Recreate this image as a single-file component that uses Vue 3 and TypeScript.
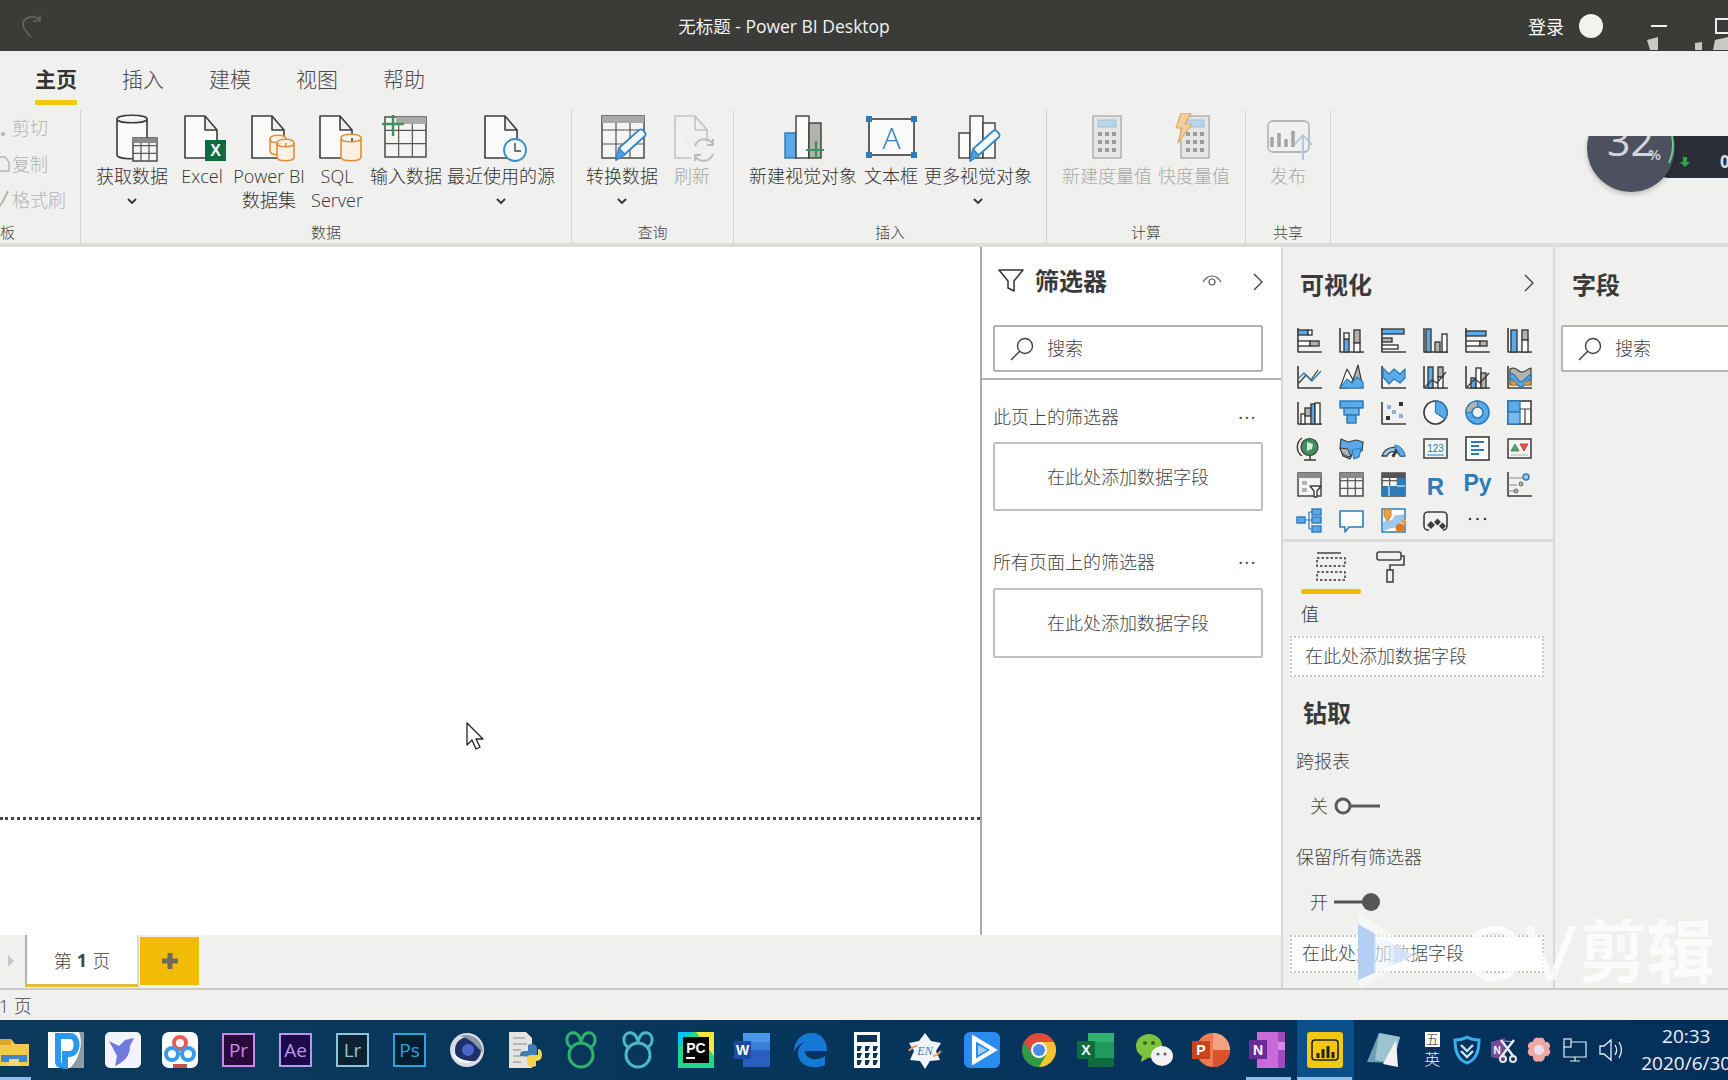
<script setup lang="ts">
const D = '#3c3c3a'
const B = '#5aa9ea'
const BD = '#2b7cb8'
const G = '#b2b2ae'
const W = '#ffffff'

const r = (x: number, y: number, w: number, h: number, f: string, s = D, sw = 1.4) =>
  `<rect x="${x}" y="${y}" width="${w}" height="${h}" fill="${f}" stroke="${s}" stroke-width="${sw}"/>`
const p = (d: string, f = 'none', s = D, sw = 1.5) =>
  `<path d="${d}" fill="${f}" stroke="${s}" stroke-width="${sw}" stroke-linejoin="round"/>`
const c = (x: number, y: number, rad: number, f: string, s = D, sw = 1.4) =>
  `<circle cx="${x}" cy="${y}" r="${rad}" fill="${f}" stroke="${s}" stroke-width="${sw}"/>`

const axisL = p('M1 0v24h24', 'none', D, 1.6)
const axisB = p('M1 2v22h24', 'none', D, 1.6)

// ribbon icons live in a 60x50 box, x=30 is the button's centre
const doc = (x: number, col = D, fill = '#fafaf8') => p(`M${x} 3h20l12 14v28h-32z M${x + 20} 3v14h12`, fill, col, 1.6)
const cyl = (x: number, y: number, w: number, h: number, col: string, fill: string) =>
  p(`M${x} ${y + 4}c0-5 ${w}-5 ${w} 0v${h - 8}c0 5-${w} 5-${w} 0z M${x} ${y + 4}c0 5 ${w} 5 ${w} 0`, fill, col, 1.6)
const grid = (x: number, y: number, w: number, h: number, cols: number, rows: number, col = D) => {
  let out = r(x, y, w, h, '#f4f4f2', col, 1.6)
  for (let i = 1; i < cols; i++) out += p(`M${x + (w * i) / cols} ${y}v${h}`, 'none', col, 1.2)
  for (let i = 1; i < rows; i++) out += p(`M${x} ${y + (h * i) / rows}h${w}`, 'none', col, 1.2)
  return out
}
const pencil = (x: number, y: number) =>
  p(`M${x} ${y + 31}l3-12 20-18c3-2 8 3 6 6l-20 18z M${x + 3} ${y + 19}l6 7`, '#f2f7fb', '#2f86c6', 1.7) +
  p(`M${x} ${y + 31}l3-12 6 7z`, '#4f9fe0', '#2f86c6', 1)
const calc = (x: number, col = '#b5b5b3') => {
  let out = r(x, 3, 28, 42, '#e6e6e4', col, 1.6) + r(x + 5, 7, 18, 7, '#b6d6ee', '#9cc0da', 1)
  for (const y of [19, 27, 35]) for (const i of [0, 7, 14]) out += `<rect x="${x + 5 + i}" y="${y}" width="4" height="4" fill="#9c9c9a"/>`
  return out
}

const ribbonIcons: Record<string, string> = {
  getData: cyl(15, 2, 30, 44, D, '#fafaf8') + grid(31, 25, 24, 23, 3, 3, '#555') + `<rect x="31" y="25" width="24" height="5" fill="#8a8a88"/>`,
  excel: doc(13) + `<rect x="33" y="27" width="21" height="21" fill="#0f6b3f"/><text x="43.5" y="43" text-anchor="middle" font-family="Liberation Sans" font-weight="700" font-size="16" fill="#fff">X</text>`,
  pbi: doc(13) + cyl(31, 22, 16, 20, '#de8f3e', '#fbf0e2') + cyl(38, 26, 17, 22, '#de8f3e', '#fbf0e2'),
  sql: doc(13) + cyl(34, 21, 20, 27, '#de8f3e', '#fbf0e2'),
  enter: grid(9, 4, 41, 40, 3, 3, '#555') + `<rect x="20" y="4" width="30" height="7" fill="#a9a9a7"/>` + p('M17 2v21M6 11h22', 'none', '#3f8f5f', 2.4),
  recent: doc(14) + c(44, 37, 11, '#f4f8fb', '#3b8fc4', 1.8) + p('M44 30v8h6', 'none', '#444', 1.4),
  transform: grid(10, 3, 42, 42, 3, 3, '#555') + `<rect x="10" y="3" width="42" height="7" fill="#a9a9a7"/>` + pencil(24, 16),
  refresh: p('M13 3h20l12 14v12M30 45H13V3M33 3v14h12', '#f2f2f0', '#c4c4c2', 1.6) + p('M33 33a10 10 0 0 1 18-2M51 26v6h-6M51 41a10 10 0 0 1-18 2M33 48v-6h6', 'none', '#bdbdbb', 2),
  newVisual: r(12, 20, 11, 25, B, BD) + r(23, 3, 13, 42, '#fafaf8', D) + r(36, 10, 12, 35, '#b2b2ae', D) + p('M43 28v18M33 37h18', 'none', '#3f8f5f', 2.2),
  textbox: r(8, 6, 45, 36, '#fafaf8', D, 1.6) + `<rect x="5" y="3" width="6" height="6" fill="${BD}"/><rect x="50" y="3" width="6" height="6" fill="${BD}"/><rect x="5" y="39" width="6" height="6" fill="${BD}"/><rect x="50" y="39" width="6" height="6" fill="${BD}"/><text x="30.5" y="36" text-anchor="middle" font-family="Open Sans" font-weight="300" font-size="30" fill="${BD}">A</text>`,
  moreVisual: r(11, 20, 11, 25, '#fafaf8', D) + r(22, 3, 13, 42, '#fafaf8', D) + r(35, 10, 12, 35, '#fafaf8', D) + pencil(22, 17),
  measure: calc(16),
  quick: calc(17) + p('M17 0h10l-6 11h7l-14 19 4-15h-6z', '#f4cf9c', '#e0a868', 1.2),
  publish: `<rect x="10" y="8" width="41" height="31" rx="5" fill="none" stroke="#b8b8b6" stroke-width="1.8"/><path d="M14 24v10M21 20v14M28 26v8M35 18v16" stroke="#a4a4a2" stroke-width="3.5"/><path d="M45 47V23M36 32l9-10 9 10" fill="none" stroke="#a9c7e2" stroke-width="1.8"/>`,
}

type RibbonItem = { lines: string[]; icon: string; w: number; more?: boolean; off?: boolean }
type RibbonGroup = { label: string; w: number; pad: number; items: RibbonItem[] }

const groups: RibbonGroup[] = [
  { label: '数据', w: 491, pad: 11, items: [
    { lines: ['获取数据'], icon: 'getData', w: 80, more: true },
    { lines: ['Excel'], icon: 'excel', w: 60 },
    { lines: ['Power BI', '数据集'], icon: 'pbi', w: 74 },
    { lines: ['SQL', 'Server'], icon: 'sql', w: 62 },
    { lines: ['输入数据'], icon: 'enter', w: 76 },
    { lines: ['最近使用的源'], icon: 'recent', w: 114, more: true },
  ] },
  { label: '查询', w: 162, pad: 10, items: [
    { lines: ['转换数据'], icon: 'transform', w: 80, more: true },
    { lines: ['刷新'], icon: 'refresh', w: 60, off: true },
  ] },
  { label: '插入', w: 313, pad: 11, items: [
    { lines: ['新建视觉对象'], icon: 'newVisual', w: 116 },
    { lines: ['文本框'], icon: 'textbox', w: 60 },
    { lines: ['更多视觉对象'], icon: 'moreVisual', w: 114, more: true },
  ] },
  { label: '计算', w: 199, pad: 15, items: [
    { lines: ['新建度量值'], icon: 'measure', w: 90, off: true },
    { lines: ['快度量值'], icon: 'quick', w: 84, off: true },
  ] },
  { label: '共享', w: 85, pad: 12, items: [{ lines: ['发布'], icon: 'publish', w: 60, off: true }] },
]

const vizIcons: string[] = [
  axisL + r(1, 2, 10, 5, B) + r(11, 2, 4, 5, W) + r(1, 13, 12, 5, W) + r(13, 13, 9, 5, G),
  axisL + r(5, 11, 5, 13, B) + r(5, 5, 5, 6, W) + r(15, 2, 6, 13, G) + r(15, 15, 6, 9, W),
  p('M1 0v24h24', 'none', D, 1.6) + r(1, 1, 22, 5, B) + r(1, 10, 10, 4, G) + r(1, 17, 16, 4, W),
  axisL + r(3, 1, 5, 23, B) + r(12, 14, 5, 10, G) + r(19, 6, 5, 18, W),
  axisL + r(1, 3, 20, 5, B) + r(1, 13, 14, 5, W) + r(15, 13, 7, 5, G),
  axisL + r(4, 2, 6, 22, B) + r(15, 2, 6, 10, G) + r(15, 12, 6, 12, W),
  axisB + p('M2 19l7-8 5 5 7-10', 'none', D, 1.3) + p('M2 14l5-5 8 8 9-10', 'none', BD, 1.3),
  p('M1 24l8-16 5 8 5-15 5 23z', G, D, 1.2) + p('M8 5l6 11-6 8H1z', W, D, 1.2) + p('M1 24l7-9 5 4 5-6 6 5v6z', B, BD, 1.2),
  axisB + p('M2 4l6 6 5-5 6 5 5-5v9l-5 5-6-4-5 5-6-7z', B, BD, 1.3),
  axisB + r(5, 3, 5, 21, B) + r(15, 3, 5, 10, G) + r(15, 13, 5, 11, W) + p('M2 23l7-7 5 3 9-11', 'none', D, 1.3),
  axisB + r(6, 14, 5, 10, B) + r(11, 4, 5, 20, W) + r(16, 9, 5, 15, G) + p('M2 23l8-8 5 4 9-10', 'none', D, 1.3),
  axisB + p('M3 5c6-3 7 2 11 3s7-4 10-4v17H3z', G, D, 1.2) + p('M3 10c6-2 7 8 11 8s7-8 10-7v4c-4 0-6 8-10 8S9 15 3 15z', B, BD, 1.4) + r(4, 18, 5, 3, '#e8a040', '#c8802a', 1) + r(18, 18, 5, 3, '#e8a040', '#c8802a', 1),
  axisB + r(4, 14, 4, 10, W) + r(8, 8, 6, 8, G) + r(14, 4, 4, 20, B) + r(18, 3, 5, 21, W),
  p('M1 1h23v7H1z', B, BD) + p('M5 8h15v7H5z', '#6ab4ee', BD) + p('M8 15h9v8H8z', B, BD),
  axisB + `<rect x="6" y="5" width="4" height="4" fill="#8fb2d2"/><rect x="11" y="10" width="4" height="4" fill="#8fb2d2"/><rect x="18" y="2" width="4" height="4" fill="#333"/><rect x="5" y="16" width="4" height="4" fill="#333"/><rect x="18" y="14" width="4" height="4" fill="#8fb2d2"/>`,
  c(12.5, 12.5, 11.5, W, D, 1.7) + p('M12.5 1A11.5 11.5 0 0 1 22 19l-9.5-6.5z', B, BD, 1.3),
  c(12.5, 12.5, 11.5, B, BD, 1.6) + c(12.5, 12.5, 5.5, '#eef0ee', BD, 1.6) + p('M1 12.5A11.5 11.5 0 0 1 12.5 1v6a6 6 0 0 0-6 5.5z', G, BD, 1.2),
  r(1, 1, 23, 23, W, D, 1.6) + r(1, 1, 12, 11, B, BD) + r(1, 12, 12, 12, '#78baf0', BD) + p('M13 9h11M18 9v15', 'none', D, 1.2),
  c(12.5, 11, 8.5, '#3f8f5f', D, 1.2) + p('M5 2a11 11 0 0 0 0 18M7 24h12M13 20v4', 'none', D, 1.5) + p('M10 6l6 2-1 5-5 2z', '#d8e8e0', 'none'),
  p('M2 3l7 3 8-2 7 2-1 9-9 1-3 7-7-3-3-8z', B, D, 1.2) + p('M1 12l8 1 3 8-5-1-4-3z', G, D, 1) + p('M13 14l9-2-2 9-5 2z', B, BD, 1.2),
  p('M1 20a12 12 0 0 1 23 0h-5a7 7 0 0 0-13 0z', '#9ec8ea', D, 1.3) + p('M14 9a12 12 0 0 1 10 11h-5a7 7 0 0 0-5-6z', B, BD, 1) + p('M11 20l4-7 1 2-3 6z', D, D, 1),
  r(1, 3, 23, 19, '#f4f4f2', D, 1.5) + `<text x="12.5" y="16" text-anchor="middle" font-family="Liberation Sans" font-size="10" fill="${BD}">123</text>` + p('M4 19h17', 'none', BD, 1),
  r(1, 1, 23, 23, W, D, 1.6) + p('M6 6h13M6 10h8M6 14h13M6 18h8', 'none', BD, 2),
  r(1, 3, 23, 19, '#f4f4f2', D, 1.5) + p('M4 15l4-7 4 7z', '#5aa36e', '#3f8f5f', 1) + p('M13 8h8l-4 7z', '#e0584f', '#c84038', 1) + p('M4 19h17', 'none', G, 1),
  r(1, 1, 23, 23, '#f4f4f2', D, 1.4) + `<rect x="1" y="1" width="23" height="5" fill="#8a8a88"/><rect x="5" y="9" width="5" height="4" fill="${G}"/><rect x="5" y="16" width="5" height="4" fill="${G}"/>` + p('M13 14h11l-4 5v6h-3v-6z', W, D, 1.4),
  grid(1, 1, 23, 23, 3, 3, '#555') + `<rect x="1" y="1" width="23" height="5" fill="#8a8a88"/>`,
  grid(1, 1, 23, 23, 3, 3, '#555') + `<rect x="1" y="1" width="23" height="5" fill="#555"/><rect x="16" y="6" width="8" height="18" fill="${BD}"/><rect x="1" y="14" width="15" height="10" fill="${BD}"/>` + p('M8 14v10M16 14h8', 'none', '#fff', 1),
  `<text x="12.5" y="23" text-anchor="middle" font-family="Liberation Sans" font-weight="700" font-size="24" fill="${BD}">R</text>`,
  `<text x="12.5" y="19" text-anchor="middle" font-family="Liberation Sans" font-weight="700" font-size="23" fill="${BD}">Py</text>`,
  axisL + p('M1 6h14M1 13h9M1 19h6', 'none', '#888', 1.2) + c(19, 5, 3, '#9ec8ea', BD, 1.4) + c(14, 12, 2, G, '#666', 1) + c(9, 19, 2, G, '#666', 1),
  r(0, 9, 8, 6, B, BD) + p('M8 12h4M12 4v17M12 4h3M12 12h3M12 21h3', 'none', BD, 1.2) + r(15, 1, 9, 6, B, BD) + r(15, 9, 9, 6, B, BD) + r(15, 18, 9, 6, B, BD),
  p('M1 3h23v16H10l-4 5v-5H1z', W, BD, 1.6),
  r(1, 1, 23, 23, W, BD, 1.5) + p('M2 14c6-4 8 1 10-4s6-2 11-4v8c-5 1-6 6-11 6-4 0-7 3-10 3z', '#9ec8ea', 'none') + p('M3 1h7v7l-3.5 5L3 8z', '#e8a040', '#c8802a', 1) + c(19, 20, 4, '#d87a20', '#d87a20', 1) + c(23, 14, 2, '#e8a040', '#e8a040', 1),
  `<rect x="1" y="4" width="23" height="18" rx="4" fill="none" stroke="${D}" stroke-width="1.6"/><rect x="6" y="18" width="14" height="6" fill="#f0f0ee"/><path d="M4 17l4-4 4 4-4 4zM11 14l3.500-3.500 3.500 3.500-3.500 3.500zM16 18l3.500-3.500 3.500 3.500-3.500 3.500z" fill="${D}"/>`,
  `<circle cx="5" cy="11" r="1.3" fill="${D}"/><circle cx="12.5" cy="11" r="1.3" fill="${D}"/><circle cx="20" cy="11" r="1.3" fill="${D}"/>`,
]

const pr = (bg: string, edge: string, text: string) =>
  `<rect x="5" y="4" width="31" height="32" fill="${bg}" stroke="${edge}" stroke-width="2"/><text x="20.500" y="27" text-anchor="middle" font-family="Open Sans" font-weight="400" font-size="19" fill="${edge}">${text}</text>`
const navicat = (col: string) =>
  `<circle cx="20" cy="25" r="12" fill="none" stroke="${col}" stroke-width="3"/><path d="M11 18C2 12 6 1 14 3c3 1 6 5 6 11 0-6 3-10 6-11 8-2 12 9 3 15" fill="none" stroke="${col}" stroke-width="3"/>`

const taskIcons: string[] = [
  `<path d="M8 9h14l4 5h14v22H8z" fill="#f3c94d"/><path d="M8 9h14v6H8z" fill="#dea62e"/><rect x="12" y="25" width="26" height="7" fill="#3f86c8"/><rect x="20" y="29" width="10" height="7" fill="#f4d778"/>`,
  `<rect x="2" y="2" width="36" height="36" fill="#fff"/><path d="M38 2v36H24C32 30 38 16 33 2z" fill="#8f9aa4"/><path d="M12 6h12c9 0 9 18-1 18h-4v12c-3 0-7-1-7-4z" fill="none" stroke="#2c97ee" stroke-width="6"/>`,
  `<rect x="2" y="2" width="36" height="36" rx="5" fill="#f2f3fb"/><path d="M6 11l10 5 6-6 9-2-4 8c0 10-6 16-15 20l2-10z" fill="#7178e0"/>`,
  `<rect x="2" y="2" width="36" height="36" rx="7" fill="#fff"/><circle cx="20" cy="13" r="6" fill="none" stroke="#ea5b55" stroke-width="4"/><circle cx="12" cy="24" r="6" fill="none" stroke="#3a9be8" stroke-width="4"/><circle cx="28" cy="24" r="6" fill="none" stroke="#3a9be8" stroke-width="4"/><rect x="13" y="34" width="14" height="4" fill="#c0564e"/>`,
  pr('#2a0a3a', '#c88ae8', 'Pr'),
  pr('#1e0a4a', '#b49ae8', 'Ae'),
  pr('#0c2233', '#8cc4dc', 'Lr'),
  pr('#061e33', '#2aa4dc', 'Ps'),
  `<circle cx="20" cy="20" r="17" fill="#d8dce4"/><circle cx="21" cy="20" r="13" fill="#1f2f6a"/><path d="M13 6c12-4 22 4 23 16-5-2-8-12-23-16z" fill="#8a96a8"/><path d="M5 22c3 10 14 14 24 9-9 1-18-2-24-9z" fill="#fff"/><circle cx="21" cy="20" r="6" fill="#4a68c8"/>`,
  `<path d="M5 2h17l6 6v30H5z" fill="#e4e4e2"/><path d="M9 8h12M9 14h14M9 20h8M9 26h8M9 32h8" stroke="#a8a8a6" stroke-width="1.5"/><path d="M16 26c0-6 4-5 8-5V15c4-2 9-1 9 4v4c0 3-3 4-5 4z" fill="#3d7eb0"/><path d="M34 19c3 0 4 3 4 6s-2 6-6 6v5c-4 2-9 1-9-3v-5c0-3 3-3 5-3h6z" fill="#f4d44a"/>`,
  navicat('#2fb36a'),
  navicat('#4cb8c4'),
  `<rect x="2" y="2" width="36" height="36" fill="#21d789"/><path d="M20 2h18v24z" fill="#f5e642"/><path d="M2 2h14L2 18z" fill="#07c3f2"/><rect x="7" y="7" width="26" height="26" fill="#000"/><text x="20" y="23" text-anchor="middle" font-family="Liberation Sans" font-weight="700" font-size="14" fill="#fff">PC</text><rect x="10" y="27" width="9" height="2" fill="#fff"/>`,
  `<rect x="10" y="3" width="27" height="34" fill="#2a5fc0"/><rect x="10" y="3" width="27" height="9" fill="#4a98e8"/><rect x="10" y="12" width="27" height="8" fill="#3a80d8"/><rect x="1" y="11" width="17" height="18" fill="#1c4aa8"/><text x="9.500" y="25" text-anchor="middle" font-family="Liberation Sans" font-weight="700" font-size="14" fill="#fff">W</text>`,
  `<path d="M4 22C4 10 12 3 22 3c9 0 15 7 15 18H15c0 8 11 11 20 5v9c-13 6-27 0-27-12 0-6 4-10 8-11-6 1-10 5-12 10z" fill="#1478d4"/>`,
  `<rect x="7" y="2" width="26" height="36" fill="#fff"/><rect x="10" y="5" width="20" height="7" fill="#0a3358"/><g fill="#0a3358"><path d="M10 16h5l-2 5h-3zM18 16h5l-2 5h-3zM26 16h5l-2 5h-3zM10 23h5l-2 5h-3zM18 23h5l-2 5h-3zM26 23h5l-2 5h-3zM10 30h5l-2 5h-3zM18 30h5l-2 5h-3zM26 30h5l-2 5h-3z"/></g>`,
  `<path d="M20 3l6 8 10 2-5 8 4 9-10 1-5 8-5-8-10-1 4-9-5-8 10-2z" fill="#f2f6f8"/><path d="M4 21c4-5 6-5 8-5M36 21c-4 5-6 5-8 5" stroke="#e8a060" stroke-width="2" fill="none"/><text x="20" y="25" text-anchor="middle" font-family="Liberation Serif" font-style="italic" font-size="12" fill="#3a7ab8">EN</text>`,
  `<rect x="2" y="2" width="36" height="36" rx="6" fill="#2a8cf0"/><path d="M12 8l20 12-20 12z" fill="none" stroke="#fff" stroke-width="4"/><path d="M16 15l9 5-9 5z" fill="#9fd0fa"/>`,
  `<circle cx="20" cy="20" r="17" fill="#df4a3a"/><path d="M20 37a17 17 0 0 0 15-25H20z" fill="#f2c430"/><path d="M3 20a17 17 0 0 0 17 17l7-12-14-1-8-12z" fill="#2f9a4a"/><circle cx="20" cy="20" r="8" fill="#fff"/><circle cx="20" cy="20" r="6" fill="#4a8ae8"/>`,
  `<rect x="12" y="3" width="26" height="34" fill="#1f9a5c"/><rect x="12" y="3" width="26" height="9" fill="#32b070"/><rect x="12" y="28" width="26" height="9" fill="#0f6b3f"/><rect x="1" y="11" width="18" height="18" fill="#0f6b3f"/><text x="10" y="25" text-anchor="middle" font-family="Liberation Sans" font-weight="700" font-size="14" fill="#fff">X</text>`,
  `<ellipse cx="15" cy="16" rx="13" ry="12" fill="#7cc43e"/><path d="M8 26l-1 6 7-4z" fill="#7cc43e"/><circle cx="11" cy="13" r="2" fill="#3a6a1e"/><circle cx="19" cy="13" r="2" fill="#3a6a1e"/><ellipse cx="28" cy="26" rx="11" ry="10" fill="#f2f2f2"/><circle cx="24" cy="24" r="1.6" fill="#666"/><circle cx="31" cy="24" r="1.6" fill="#666"/>`,
  `<circle cx="22" cy="20" r="17" fill="#ed7a50"/><path d="M22 3a17 17 0 0 1 17 17H22z" fill="#f4a083"/><path d="M22 20h17a17 17 0 0 1-17 17z" fill="#d9532c"/><rect x="1" y="11" width="18" height="18" fill="#c8431e"/><text x="10" y="25" text-anchor="middle" font-family="Liberation Sans" font-weight="700" font-size="14" fill="#fff">P</text>`,
  `<rect x="9" y="2" width="28" height="36" fill="#c86ad8"/><rect x="30" y="2" width="7" height="36" fill="#a24ac0"/><rect x="30" y="12" width="7" height="8" fill="#d88ae8"/><rect x="1" y="10" width="18" height="19" fill="#6a2a9a"/><text x="10" y="25" text-anchor="middle" font-family="Liberation Sans" font-weight="700" font-size="14" fill="#fff">N</text>`,
  `<rect x="2" y="2" width="36" height="36" rx="3" fill="#f2c811"/><rect x="7" y="10" width="26" height="20" rx="3" fill="none" stroke="#222" stroke-width="1.6"/><path d="M13 28v-5M18 28v-9M23 28v-12M28 28v-6" stroke="#222" stroke-width="3"/>`,
  `<path d="M4 32L16 3l21 4-7 26z" fill="#6aa0b4"/><path d="M16 3l21 4-7 26-18-3z" fill="#9cc4d0"/><path d="M20 34l13-24 2 27z" fill="#f2f2f0"/>`,
]

const trayIcons: string[] = [
  `<path d="M15 2c5 3 8 3 12 3 0 12-3 20-12 23C6 25 3 17 3 5c4 0 7 0 12-3z" fill="none" stroke="#38b0f0" stroke-width="3"/><path d="M9 10l6 6 6-6M9 16l6 6 6-6" fill="none" stroke="#bfe6fa" stroke-width="2.400"/>`,
  `<path d="M3 7l14-4v22L3 22z" fill="#7a4a9a"/><path d="M17 6l9 1" stroke="#c8a8d8"/><text x="9" y="19" text-anchor="middle" font-family="Liberation Sans" font-weight="700" font-size="10" fill="#fff">N</text><path d="M13 5l13 17M26 5L13 22" stroke="#e8e8e8" stroke-width="2.400"/><circle cx="15" cy="24" r="3" fill="none" stroke="#e8e8e8" stroke-width="2"/><circle cx="25" cy="24" r="3" fill="none" stroke="#e8e8e8" stroke-width="2"/>`,
  `<path d="M15 3c4-2 6 2 6 4 3-1 7 3 4 7 3 3 0 8-4 7 0 4-4 7-6 5-3 2-7-1-6-5-4 1-7-4-4-7-3-4 1-8 4-7 0-2 2-6 6-4z" fill="#f0a8a0"/><circle cx="15" cy="15" r="5" fill="#e8e0f0"/>`,
  `<path d="M11 7h15v15H4V12M10 26h10M15 22v4" fill="none" stroke="#e8eef2" stroke-width="1.200"/><rect x="4" y="4" width="7" height="8" fill="#0a3358" stroke="#e8eef2" stroke-width="1.200"/>`,
  `<path d="M4 11v8h4l7 6V5l-7 6zM19 10c2 3 2 7 0 10M23 7c3 5 3 11 0 16" fill="none" stroke="#e8eef2" stroke-width="1.300"/>`,
]
</script>

<template>
  <div class="app">
    <header class="titlebar">
      <svg class="redo" width="24" height="26" viewBox="0 0 24 26"><path d="M20 7C14 1 4 4 3 11c0 4 3 8 8 13M20 2v6h-7" fill="none" stroke="#66665f" stroke-width="1.6" /></svg>
      <span class="title">无标题 - Power BI Desktop</span>
      <span class="login">登录</span>
      <span class="avatar"></span>
      <span class="min"></span>
      <span class="max"></span>
    </header>

    <section class="ribbon">
      <nav class="tabs">
        <span class="tab active">主页</span>
        <span class="tab">插入</span>
        <span class="tab">建模</span>
        <span class="tab">视图</span>
        <span class="tab">帮助</span>
      </nav>
      <div class="groups">
        <div class="group clip">
          <div class="clip-rows">
            <div class="clip-row">
              <svg width="10" height="20" viewBox="0 0 10 20"><circle cx="3" cy="17" r="2" fill="#b5b5b3" /></svg>剪切
            </div>
            <div class="clip-row">
              <svg width="10" height="20" viewBox="0 0 10 20"><path d="M-2 4l7 0 4 5v9H-2z" fill="none" stroke="#b5b5b3" stroke-width="1.4" /></svg>复制
            </div>
            <div class="clip-row">
              <svg width="10" height="20" viewBox="0 0 10 20"><path d="M8 2L2 14l-3 4" fill="none" stroke="#b5b5b3" stroke-width="2" /></svg>格式刷
            </div>
          </div>
          <div class="group-label clip-label">剪贴板</div>
        </div>

        <div v-for="g in groups" :key="g.label" class="group" :style="{ width: g.w + 'px' }">
          <div class="buttons" :style="{ paddingLeft: g.pad + 'px' }">
            <div
              v-for="item in g.items"
              :key="item.icon"
              class="btn"
              :class="{ off: item.off }"
              :style="{ width: item.w + 'px' }"
            >
              <svg class="btn-icon" width="60" height="50" viewBox="0 0 60 50" v-html="ribbonIcons[item.icon]"></svg>
              <span v-for="line in item.lines" :key="line" class="btn-line">{{ line }}</span>
              <svg v-if="item.more" class="chev" width="10" height="7" viewBox="0 0 10 7"><path d="M1 1l4 4 4-4" fill="none" stroke="#333" stroke-width="1.8" /></svg>
            </div>
          </div>
          <div class="group-label">{{ g.label }}</div>
        </div>
      </div>
    </section>

    <main class="body">
      <div class="left">
        <div class="work">
          <div class="canvas">
            <div class="page"></div>
          </div>
          <aside class="filters">
            <div class="filters-head">
              <svg class="funnel" width="26" height="24" viewBox="0 0 26 24"><path d="M1 1h24l-9 11v10l-6-3v-7z" fill="none" stroke="#333" stroke-width="1.5" stroke-linejoin="round" /></svg>
              <span class="pane-title">筛选器</span>
              <svg class="eye" width="20" height="14" viewBox="0 0 20 14"><path d="M1 8c5-8 13-8 18 0" fill="none" stroke="#555" stroke-width="1.2" /><circle cx="10" cy="8" r="3" fill="none" stroke="#555" stroke-width="1.2" /></svg>
              <svg class="chevron" width="10" height="18" viewBox="0 0 10 18"><path d="M1 1l8 8-8 8" fill="none" stroke="#444" stroke-width="1.4" /></svg>
            </div>
            <div class="search-wrap">
              <div class="search">
                <svg width="24" height="24" viewBox="0 0 24 24"><circle cx="15" cy="9" r="7.5" fill="none" stroke="#444" stroke-width="1.4" /><path d="M9.5 14.5L1 23" stroke="#444" stroke-width="1.4" /></svg>
                <span>搜索</span>
              </div>
            </div>
            <div class="filter-head first"><span>此页上的筛选器</span><span class="dots">···</span></div>
            <div class="filter-box">在此处添加数据字段</div>
            <div class="filter-head second"><span>所有页面上的筛选器</span><span class="dots">···</span></div>
            <div class="filter-box">在此处添加数据字段</div>
          </aside>
        </div>
        <div class="page-tabs">
          <svg class="tab-arrow" width="8" height="14" viewBox="0 0 8 14"><path d="M1 1l6 6-6 6z" fill="#c4c8cc" /></svg>
          <div class="page-tab">第 <b>1</b> 页</div>
          <div class="page-add">
            <svg width="18" height="18" viewBox="0 0 18 18"><path d="M9 1v16M1 9h16" stroke="#6e6a5c" stroke-width="5" /></svg>
          </div>
        </div>
      </div>

      <aside class="viz">
        <div class="viz-head">
          <span class="pane-title">可视化</span>
          <svg class="viz-chev" width="10" height="18" viewBox="0 0 10 18"><path d="M1 1l8 8-8 8" fill="none" stroke="#444" stroke-width="1.4" /></svg>
        </div>
        <div class="viz-grid">
          <div v-for="(ic, i) in vizIcons" :key="i" class="viz-cell">
            <svg width="25" height="25" viewBox="0 0 25 25" v-html="ic"></svg>
          </div>
        </div>
        <div class="viz-tabs">
          <div class="viz-tab on">
            <svg width="32" height="32" viewBox="0 0 32 32"><path d="M2 2h24" stroke="#444" stroke-width="1.5" /><path d="M2 7h28v8H2zM2 21h28v8H2z" fill="none" stroke="#333" stroke-width="1.5" stroke-dasharray="2.5 2" /></svg>
          </div>
          <div class="viz-tab">
            <svg width="30" height="32" viewBox="0 0 30 32"><rect x="1" y="1" width="24" height="8" rx="2" fill="none" stroke="#444" stroke-width="1.6" /><path d="M25 5h3v9H14v5" fill="none" stroke="#444" stroke-width="1.6" /><rect x="11" y="19" width="6" height="12" fill="none" stroke="#444" stroke-width="1.6" /></svg>
          </div>
        </div>
        <div class="well-label">值</div>
        <div class="well">在此处添加数据字段</div>
        <div class="drill-title">钻取</div>
        <div class="opt-label first">跨报表</div>
        <div class="toggle-row">
          <span>关</span>
          <svg width="46" height="18" viewBox="0 0 46 18"><circle cx="9" cy="9" r="7" fill="none" stroke="#5a5a5a" stroke-width="3" /><path d="M16 9h30" stroke="#5a5a5a" stroke-width="3" /></svg>
        </div>
        <div class="opt-label second">保留所有筛选器</div>
        <div class="toggle-row on">
          <span>开</span>
          <svg width="46" height="18" viewBox="0 0 46 18"><circle cx="37" cy="9" r="9" fill="#555" /><path d="M0 9h30" stroke="#555" stroke-width="3" /></svg>
        </div>
        <div class="well small">在此处添加数据字段</div>
      </aside>

      <aside class="fields">
        <div class="fields-head"><span class="pane-title">字段</span></div>
        <div class="search wide">
          <svg width="24" height="24" viewBox="0 0 24 24"><circle cx="15" cy="9" r="7.5" fill="none" stroke="#444" stroke-width="1.4" /><path d="M9.5 14.5L1 23" stroke="#444" stroke-width="1.4" /></svg>
          <span>搜索</span>
        </div>
      </aside>
    </main>

    <footer class="status"><span>第 1 页</span></footer>

    <div class="taskbar">
      <div class="apps">
        <div v-for="(ic, i) in taskIcons" :key="i" class="app-item" :class="{ running: i === 0 || i === 22, current: i === 23 }">
          <svg width="40" height="40" viewBox="0 0 40 40" v-html="ic"></svg>
        </div>
      </div>
      <div class="tray">
        <div class="ime"><span class="ime-top">五</span><span>英</span></div>
        <div v-for="(ic, i) in trayIcons" :key="i" class="tray-item">
          <svg width="30" height="30" viewBox="0 0 30 30" v-html="ic"></svg>
        </div>
        <div class="clock"><span>20:33</span><span>2020/6/30</span></div>
      </div>
    </div>

    <!-- things lying over the app: screen recorder's widget, cursor, watermark -->
    <div class="monitor">
      <div class="monitor-panel">
        <svg class="monitor-arrow" width="10" height="10" viewBox="0 0 10 10"><path d="M3 0h4v5h3L5 10 0 5h3z" fill="#2ea44f" /></svg>
        <span class="monitor-val">0</span>
      </div>
      <div class="monitor-ball">
        <span class="monitor-num">32</span><span class="monitor-pct">%</span>
      </div>
      <svg class="monitor-arc" width="12" height="30" viewBox="0 0 12 30"><path d="M6 0c2 9 1 18-3 27" fill="none" stroke="#6ec49a" stroke-width="2" /></svg>
    </div>
    <svg class="cursor" width="20" height="28" viewBox="0 0 20 28"><path d="M1 1v22l5-5 4 9 4-2-4-8h7z" fill="#fff" stroke="#222" stroke-width="1.3" stroke-linejoin="round" /></svg>
    <svg class="shards" width="84" height="16" viewBox="0 0 84 16"><path d="M1 5l11-3v13H4zM49 8l7-1v8h-7zM67 15l2-10 13-3v13z" fill="#c8c8c4" /></svg>
    <svg class="mark-play" width="66" height="80" viewBox="0 0 66 80">
      <defs>
        <linearGradient id="mk" x1="0" y1="0" x2="1" y2="0">
          <stop offset="0" stop-color="#b5cff4" />
          <stop offset="0.28" stop-color="#b5cff4" />
          <stop offset="0.34" stop-color="#dce9fa" stop-opacity="0.15" />
          <stop offset="0.55" stop-color="#dce9fa" stop-opacity="0.4" />
          <stop offset="0.7" stop-color="#d5e3fa" />
          <stop offset="1" stop-color="#d5e3fa" />
        </linearGradient>
      </defs>
      <path d="M2 2l62 44-62 32z" fill="#fff" opacity=".45" />
      <path d="M1 14l56 32-56 24z" fill="url(#mk)" />
    </svg>
    <div class="mark-text"><span class="mark-ov">OV</span><span class="mark-cn">剪辑</span></div>
  </div>
</template>

<style>
html,
body {
  margin: 0;
  background: #f0f0ee;
}
</style>

<style scoped>
.app {
  position: relative;
  width: 1728px;
  height: 1080px;
  overflow: hidden;
  display: flex;
  flex-direction: column;
  background: #f0f0ee;
  color: #3a3a3a;
  font-family: "Open Sans", "Noto Sans CJK SC", sans-serif;
  font-size: 18px;
  font-weight: 300;
}

.titlebar {
  position: relative;
  height: 51px;
  flex: none;
  display: flex;
  align-items: center;
  background: #3b3b38;
  color: #fff;
}
.redo {
  margin-left: 20px;
}
.title {
  position: absolute;
  left: 0;
  width: 1568px;
  text-align: center;
  font-size: 17.5px;
  font-weight: 400;
  color: #f2f2f2;
}
.login {
  margin-left: auto;
  font-size: 18px;
  font-weight: 400;
}
.avatar {
  width: 24px;
  height: 24px;
  border-radius: 50%;
  background: #f2f2ee;
  margin-left: 15px;
}
.min {
  width: 16px;
  height: 2px;
  background: #eee;
  margin-left: 48px;
}
.max {
  width: 14px;
  height: 12px;
  border: 2px solid #eee;
  margin-left: 48px;
  margin-right: -5px;
}

.ribbon {
  height: 196px;
  flex: none;
  box-sizing: border-box;
  border-bottom: 4px solid #dcdcda;
}
.tabs {
  height: 57px;
  box-sizing: border-box;
  padding: 15px 0 0 35px;
  display: flex;
  gap: 45px;
}
.tab {
  width: 42px;
  height: 40px;
  line-height: 26px;
  font-size: 21px;
  white-space: nowrap;
  color: #4a4a4a;
}
.tab.active {
  font-weight: 700;
  color: #333;
  box-shadow: 0 2px 0 0 #f2c811;
  border-bottom: 3px solid #f2c811;
  height: 34px;
}

.groups {
  display: flex;
  height: 134px;
  margin-top: 2px;
}
.group {
  box-sizing: border-box;
  display: flex;
  flex-direction: column;
  border-right: 1px solid #d4d4d2;
  flex: none;
  height: 133px;
}
.buttons {
  display: flex;
  flex: 1;
  min-height: 0;
}
.btn {
  flex: none;
  display: flex;
  flex-direction: column;
  align-items: center;
  padding-top: 3px;
  white-space: nowrap;
  color: #333;
}
.btn.off {
  color: #a9a9a7;
}
.btn-icon {
  flex: none;
  margin-bottom: 1px;
}
.btn-line {
  line-height: 24px;
  height: 24px;
  flex: none;
}
.chev {
  margin-top: 10px;
  flex: none;
}
.group-label {
  height: 18px;
  margin-bottom: 1px;
  line-height: 16px;
  flex: none;
  text-align: center;
  font-size: 15px;
  color: #444;
}
.clip {
  width: 81px;
  overflow: hidden;
}
.clip-rows {
  flex: 1;
  margin-top: -1px;
}
.clip-row {
  display: flex;
  align-items: center;
  height: 36px;
  font-size: 18px;
  color: #b5b5b3;
  white-space: nowrap;
  gap: 2px;
}
.clip-label {
  text-align: left;
  margin-left: -30px;
  white-space: nowrap;
}

.body {
  flex: 1;
  min-height: 0;
  display: flex;
}
.left {
  width: 1281px;
  flex: none;
  display: flex;
  flex-direction: column;
}
.work {
  flex: 1;
  min-height: 0;
  display: flex;
}
.canvas {
  width: 980px;
  flex: none;
  background: #fff;
}
.page {
  height: 570px;
  border-bottom: 3px dotted #444;
}

.filters {
  flex: 1;
  background: #fff;
  border-left: 2px solid #a8a8a8;
  box-sizing: border-box;
}
.filters-head {
  height: 64px;
  display: flex;
  align-items: center;
  padding-left: 16px;
}
.funnel {
  margin-top: 3px;
}
.pane-title {
  font-size: 24px;
  font-weight: 700;
  color: #3a3a3a;
}
.filters-head .pane-title {
  margin-left: 11px;
}
.eye {
  margin: 3px 0 0 95px;
}
.chevron {
  margin: 5px 0 0 31px;
}
.search-wrap {
  margin-top: 14px;
  padding: 0 0 6px 11px;
  border-bottom: 2px solid #b0b0b0;
}
.search {
  box-sizing: border-box;
  width: 270px;
  height: 47px;
  background: #fff;
  border: 2px solid #b4b4b4;
  border-radius: 2px;
  display: flex;
  align-items: center;
  padding-left: 15px;
  gap: 13px;
  color: #444;
}
.search span {
  padding-bottom: 3px;
}
.filter-head {
  display: flex;
  justify-content: space-between;
  width: 270px;
  height: 30px;
  line-height: 30px;
  margin-left: 11px;
  color: #444;
}
.filter-head.first {
  margin-top: 22px;
}
.filter-head.second {
  margin-top: 36px;
}
.filter-head.second + .filter-box {
  margin-top: 11px;
  height: 70px;
}
.dots {
  color: #444;
  font-weight: 400;
  letter-spacing: 1.5px;
  margin-right: 6px;
}
.filter-box {
  box-sizing: border-box;
  width: 270px;
  height: 69px;
  margin: 10px 0 0 11px;
  padding-bottom: 2px;
  border: 2px solid #c0c0c0;
  border-radius: 2px;
  display: flex;
  align-items: center;
  justify-content: center;
  color: #444;
}

.page-tabs {
  height: 53px;
  flex: none;
  display: flex;
  background: #f0f0ee;
}
.tab-arrow {
  margin: 19px 0 0 7px;
}
.page-tab {
  box-sizing: border-box;
  width: 114px;
  height: 52px;
  margin-left: 10px;
  background: #fff;
  border-left: 2px solid #b0b0b0;
  border-right: 2px solid #d8d8d6;
  border-bottom: 3px solid #e8b93a;
  display: flex;
  align-items: center;
  justify-content: center;
  gap: 5px;
  color: #444;
}
.page-tab b {
  font-weight: 700;
}
.page-add {
  width: 59px;
  height: 48px;
  margin: 2px 0 0 1px;
  background: #f2bc06;
  display: flex;
  align-items: center;
  justify-content: center;
}

.viz {
  width: 272px;
  flex: none;
  box-sizing: border-box;
  border-left: 2px solid #d8d8d6;
}
.viz-head {
  height: 72px;
  display: flex;
  align-items: center;
  padding-left: 17px;
  box-sizing: border-box;
}
.viz-chev {
  margin-left: 152px;
}
.viz-grid {
  margin: 3px 0 0 5px;
  display: grid;
  grid-template-columns: repeat(6, 42px);
  grid-auto-rows: 36px;
}
.viz-cell {
  display: flex;
  align-items: center;
  justify-content: center;
}
.viz-cell svg {
  overflow: visible;
}
.viz-tabs {
  margin-top: 1px;
  border-top: 3px solid #dcdcda;
  display: flex;
  padding-left: 18px;
  height: 50px;
  box-sizing: border-box;
}
.viz-tab {
  width: 60px;
  height: 47px;
  display: flex;
  align-items: center;
  justify-content: center;
  box-sizing: border-box;
  padding-top: 3px;
  position: relative;
}
.viz-tab.on::after {
  content: "";
  position: absolute;
  left: 0;
  right: 0;
  bottom: -5px;
  height: 5px;
  border-radius: 3px;
  background: #f2bc06;
}
.well-label {
  margin: 13px 0 0 18px;
  height: 24px;
  line-height: 24px;
  color: #333;
}
.well {
  box-sizing: border-box;
  width: 254px;
  height: 41px;
  margin: 10px 0 0 7px;
  padding: 0 0 4px 13px;
  background: #fff;
  border: 2px dotted #c8c8c6;
  display: flex;
  align-items: center;
  color: #444;
}
.well.small {
  height: 38px;
  margin-top: 21px;
  padding-left: 10px;
}
.drill-title {
  margin: 20px 0 0 20px;
  height: 32px;
  line-height: 32px;
  font-size: 24px;
  font-weight: 700;
  color: #3a3a3a;
}
.opt-label {
  margin-left: 13px;
  height: 24px;
  line-height: 24px;
  color: #444;
}
.opt-label.first {
  margin-top: 20px;
}
.opt-label.second {
  margin-top: 27px;
}
.toggle-row {
  display: flex;
  align-items: center;
  gap: 6px;
  height: 24px;
  margin: 21px 0 0 27px;
  color: #444;
}
.toggle-row span {
  margin-top: -2px;
}

.fields {
  flex: 1;
  min-width: 0;
  border-left: 2px solid #d8d8d6;
}
.fields-head {
  height: 72px;
  display: flex;
  align-items: center;
  padding-left: 17px;
}
.search.wide {
  width: 220px;
  margin: 6px 0 0 6px;
}

.status {
  height: 32px;
  flex: none;
  box-sizing: border-box;
  border-top: 2px solid #cacac8;
  display: flex;
  align-items: center;
  color: #444;
  font-size: 18px;
}
.status span {
  margin-left: -24px;
  white-space: nowrap;
}

.taskbar {
  height: 60px;
  flex: none;
  display: flex;
  background: linear-gradient(90deg, #0b3a5c, #06355c 50%, #03305a);
}
.apps {
  display: flex;
  margin-left: -20px;
}
.app-item {
  position: relative;
  width: 57.25px;
  height: 60px;
  display: flex;
  align-items: center;
  justify-content: center;
  flex: none;
}
.app-item.running::after,
.app-item.current::after {
  content: "";
  position: absolute;
  left: 6px;
  right: 6px;
  bottom: 0;
  height: 3px;
  background: #8cc0e8;
}
.app-item.current {
  background: #0b4f8a;
}
.app-item.current::after {
  left: 0;
  right: 2px;
}
.tray {
  display: flex;
  align-items: center;
  gap: 6px;
  padding-left: 7px;
  color: #fff;
}
.ime {
  width: 28px;
  display: flex;
  flex-direction: column;
  align-items: center;
  font-size: 16px;
  line-height: 18px;
  gap: 3px;
  color: #e8eef2;
}
.ime-top {
  width: 15px;
  height: 15px;
  line-height: 15px;
  font-size: 13px;
  text-align: center;
  background: #fff;
  color: #111;
}
.tray-item {
  width: 30px;
  height: 30px;
  flex: none;
}
.clock {
  width: 92px;
  flex: none;
  margin-left: 8px;
  display: flex;
  flex-direction: column;
  align-items: center;
  font-size: 19px;
  font-weight: 400;
  line-height: 27px;
  color: #eef2f6;
}

.monitor {
  position: absolute;
  left: 1580px;
  top: 136px;
  width: 148px;
  height: 62px;
  overflow: hidden;
}
.monitor-panel {
  position: absolute;
  left: 80px;
  top: 0;
  width: 68px;
  height: 42px;
  background: #2b2e36;
  border-radius: 0 0 0 8px;
  color: #ddd;
}
.monitor-arrow {
  position: absolute;
  left: 20px;
  top: 21px;
}
.monitor-val {
  position: absolute;
  left: 60px;
  top: 16px;
  font-weight: 700;
  font-size: 17px;
  line-height: 20px;
}
.monitor-ball {
  position: absolute;
  left: 7px;
  top: -32px;
  width: 88px;
  height: 88px;
  border-radius: 50%;
  background: #4d505e;
  box-shadow: 0 2px 5px rgba(0, 0, 0, 0.25);
  color: #d4d6dc;
}
.monitor-num {
  position: absolute;
  left: 20px;
  top: 12px;
  font-size: 41px;
  line-height: 48px;
  font-weight: 400;
}
.monitor-pct {
  position: absolute;
  left: 61px;
  top: 40px;
  font-size: 15px;
  line-height: 20px;
  font-weight: 600;
}
.monitor-arc {
  position: absolute;
  left: 86px;
  top: 0;
}
.cursor {
  position: absolute;
  left: 466px;
  top: 722px;
}
.shards {
  position: absolute;
  left: 1646px;
  top: 35px;
}
.mark-play {
  position: absolute;
  left: 1357px;
  top: 910px;
}
.mark-text {
  position: absolute;
  left: 1464px;
  top: 913px;
  height: 80px;
  display: flex;
  align-items: center;
  color: rgba(255, 255, 255, 0.75);
  font-family: "Liberation Sans", "Noto Sans CJK SC", sans-serif;
  white-space: nowrap;
}
.mark-ov {
  font-size: 78px;
  line-height: 80px;
  font-weight: 400;
}
.mark-cn {
  font-size: 68px;
  line-height: 80px;
  font-weight: 700;
  margin-left: 2px;
}
</style>
